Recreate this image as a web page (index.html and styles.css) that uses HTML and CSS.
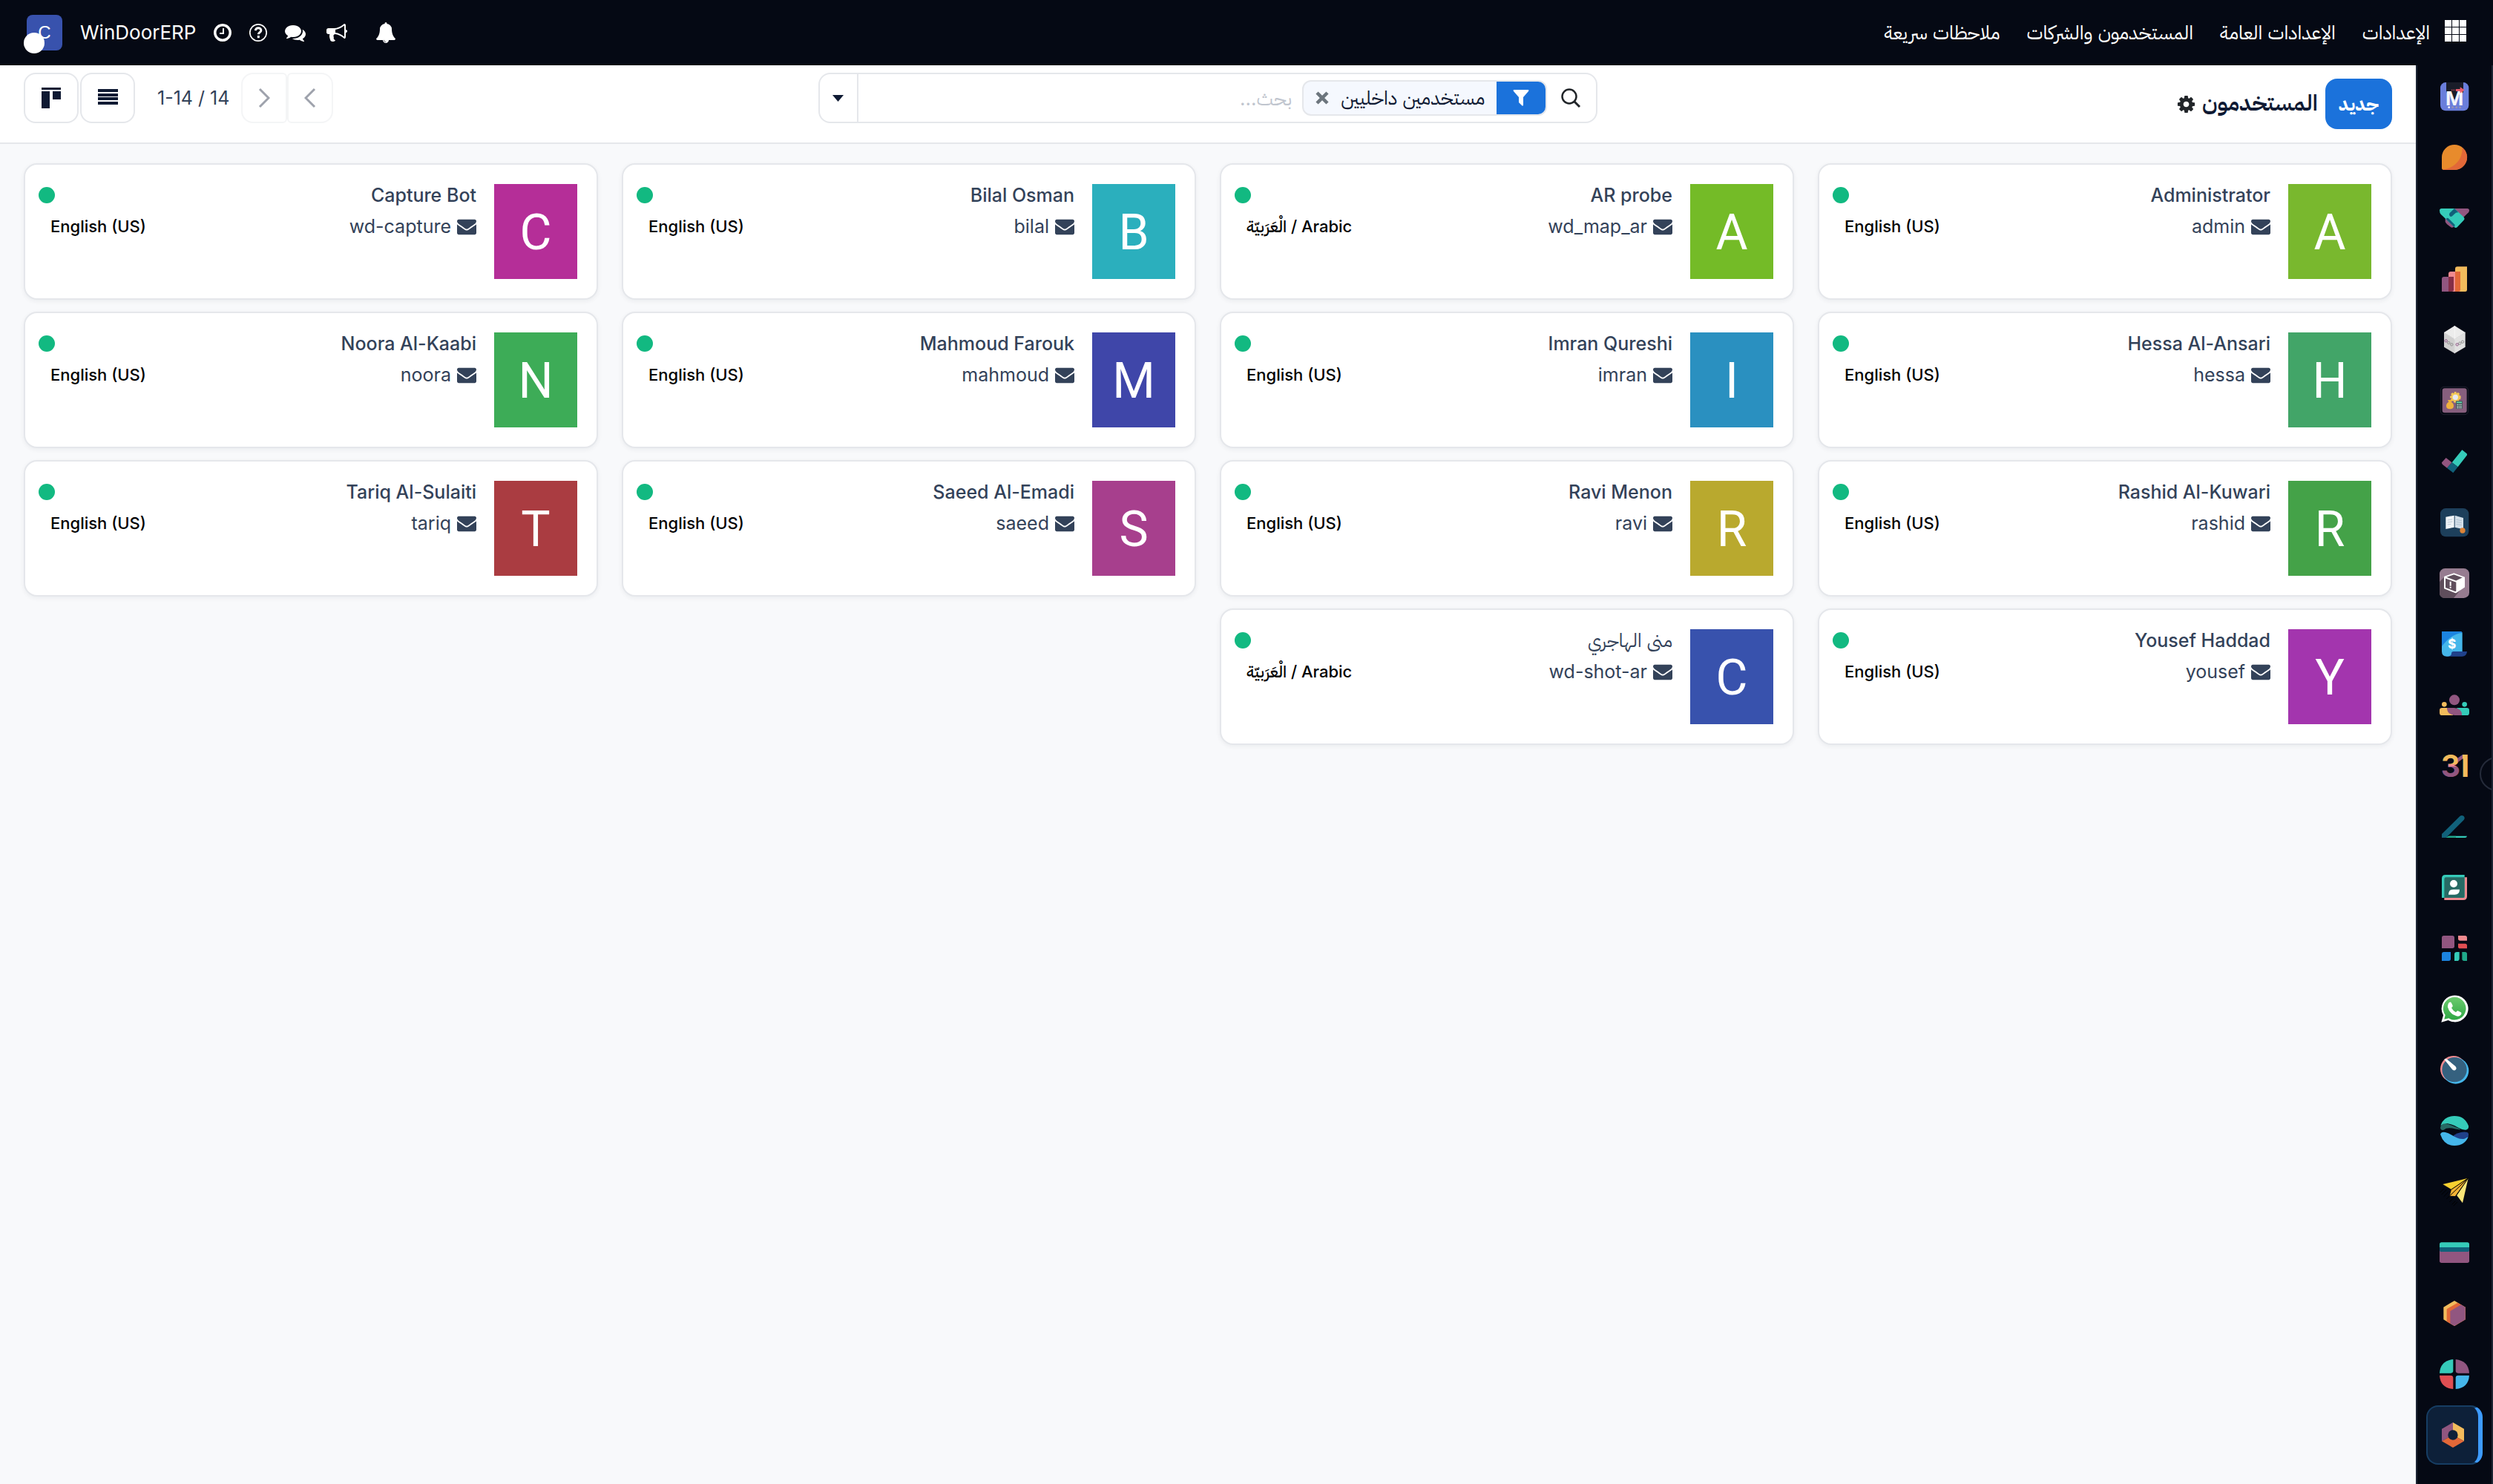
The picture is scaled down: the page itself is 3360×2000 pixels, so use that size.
FILE: index.html
```html
<!DOCTYPE html>
<html lang="ar" dir="rtl">
<head>
<meta charset="utf-8">
<meta name="viewport" content="width=device-width, initial-scale=1">
<title>المستخدمون</title>
<link rel="stylesheet" href="styles.css">
</head>
<body>
<svg class="defs" aria-hidden="true">
  <defs>
    <symbol id="envelope" viewBox="0 0 1792 1792"><path d="M1792 710v794q0 66-47 113t-113 47h-1472q-66 0-113-47t-47-113v-794q44 49 101 87 362 246 497 345 57 42 92.500 65.500t94.500 48 110 24.500h2q51 0 110-24.500t94.500-48 92.500-65.500q170-123 498-345 57-39 100-87zm0-294q0 79-49 151t-122 123q-376 261-468 325-10 7-42.500 31t-54 38.500-52 32.500-57.500 27-50 9h-2q-23 0-50-9t-57.500-27-52-32.500-54-38.500-42.500-31q-91-64-262-182.500t-205-142.500q-62-42-117-115.500t-55-136.500q0-78 41.500-130t118.500-52h1472q65 0 112.500 47t47.500 113z"/></symbol>
    <linearGradient id="wa" x1="0" y1="0" x2="0" y2="1"><stop offset="0" stop-color="#6ccb6e"/><stop offset="1" stop-color="#2fa744"/></linearGradient>
    <linearGradient id="three" gradientUnits="userSpaceOnUse" x1="0" y1="1371" x2="0" y2="1461"><stop offset=".43" stop-color="#f2bb5c"/><stop offset=".43" stop-color="#f08a8f"/><stop offset=".55" stop-color="#f08a8f"/><stop offset=".55" stop-color="#915680"/></linearGradient>
    <linearGradient id="one" gradientUnits="userSpaceOnUse" x1="188" y1="0" x2="225" y2="0"><stop offset=".5" stop-color="#915680"/><stop offset=".5" stop-color="#f2bb5c"/></linearGradient>
  </defs>
</svg>

<header class="topbar">
  <button class="bare" aria-label="التطبيقات"><svg width="29" height="29" viewBox="0 0 29 29" fill="#fff"><path d="M0 0h9v9H0zM10 0h9v9h-9zM20 0h9v9h-9zM0 10h9v9H0zM10 10h9v9h-9zM20 10h9v9h-9zM0 20h9v9H0zM10 20h9v9h-9zM20 20h9v9h-9z"/></svg></button>
  <nav class="menu">
    <a href="#">الإعدادات</a>
    <a href="#">الإعدادات العامة</a>
    <a href="#">المستخدمون والشركات</a>
    <a href="#">ملاحظات سريعة</a>
  </nav>
  <div class="systray" dir="ltr">
    <button class="bare user" aria-label="المستخدم"><span class="user-pic">C</span></button>
    <span class="company">WinDoorERP</span>
    <button class="bare" aria-label="الأنشطة"><svg width="24" height="28" viewBox="0 0 1536 1792" fill="#fff"><path d="M896 544v448q0 14-9 23t-23 9h-320q-14 0-23-9t-9-23v-64q0-14 9-23t23-9h224v-352q0-14 9-23t23-9h64q14 0 23 9t9 23zm416 352q0-148-73-273t-198-198-273-73-273 73-198 198-73 273 73 273 198 198 273 73 273-73 198-198 73-273zm224 0q0 209-103 385.500t-279.500 279.500-385.500 103-385.500-103-279.500-279.500-103-385.500 103-385.500 279.500-279.500 385.500-103 385.500 103 279.500 279.500 103 385.500z"/></svg></button>
    <button class="bare" aria-label="مساعدة"><svg width="24" height="28" viewBox="0 0 24 28" fill="none" stroke="#fff"><circle cx="12" cy="14" r="11.200" stroke-width="1.700"/><path d="M8.300 11.200c.3-2.600 2-3.500 3.900-3.500 2.100 0 3.700 1.300 3.700 3.200 0 2.900-3.600 2.800-3.600 5.300" stroke-width="2.900"/><path d="M12.300 18v3.200" stroke-width="3"/></svg></button>
    <button class="bare" aria-label="المحادثات"><svg width="28" height="28" viewBox="0 0 1792 1792" fill="#fff"><path d="M1408 768q0 139-94 257t-256.500 186.500-353.500 68.500q-86 0-176-16-124 88-278 128-36 9-86 16h-3q-11 0-20.500-8t-11.500-21q-1-3-1-6.500t.5-6.500 2-6l2.500-5 3.500-5.500 4-5 4.500-5 4-4.500q5-6 23-25t26-29.500 22.500-29 25-38.500 20.500-44q-124-72-195-177t-71-224q0-139 94-257t256.500-186.500 353.500-68.500 353.500 68.500 256.500 186.500 94 257zm384 256q0 120-71 224.500t-195 176.500q10 24 20.500 44t25 38.500 22.500 29 26 29.500 23 25q1 1 4 4.500t4.500 5 4 5 3.500 5.500l2.500 5 2 6 .5 6.500-1 6.500q-3 14-13 22t-22 7q-50-7-86-16-154-40-278-128-90 16-176 16-271 0-472-132 58 4 88 4 161 0 309-45t264-129q125-92 192-212t67-254q0-77-23-152 129 71 204 178t75 230z"/></svg></button>
    <button class="bare news" aria-label="الإعلانات"><svg width="28" height="28" viewBox="0 0 1792 1792" fill="#fff"><path d="M1664 640q53 0 90.500 37.500t37.500 90.500-37.500 90.500-90.500 37.500v384q0 52-38 90t-90 38q-417-347-812-380-58 19-91 66t-31 100.500 40 92.500q-20 33-23 65.500t6 58 33.500 55 48 50 61.500 50.500q-29 58-111.500 83t-168.500 11.500-132-55.500q-7-23-29.500-87.500t-32-94.500-23-89-15-101 3.500-98.500 22-110.500h-122q-66 0-113-47t-47-113v-192q0-66 47-113t113-47h480q435 0 896-384 52 0 90 38t38 90v384zm-128 604v-954q-394 302-768 343v270q377 42 768 341z"/></svg></button>
    <button class="bare bell" aria-label="التنبيهات"><svg width="28" height="28" viewBox="0 0 1792 1792" fill="#fff"><path d="M912 1696q0-16-16-16-59 0-101.500-42.500t-42.500-101.500q0-16-16-16t-16 16q0 73 51.500 124.500t124.500 51.500q16 0 16-16zm816-288q0 52-38 90t-90 38h-448q0 106-75 181t-181 75-181-75-75-181h-448q-52 0-90-38t-38-90q50-42 91-88t85-119.500 74.500-158.500 50-206 19.500-260q0-152 117-282.500t307-158.500q-8-19-8-39 0-40 28-68t68-28 68 28 28 68q0 20-8 39 190 28 307 158.500t117 282.500q0 139 19.500 260t50 206 74.500 158.500 85 119.500 91 88z"/></svg></button>
  </div>
</header>

<div class="shell">
  <aside class="apps">
    <a href="#" aria-label="Mail"><svg viewBox="114 90 120 120"><rect x="117" y="93" width="115" height="115" rx="22" fill="#6a7edb"/><path d="M141 93h69v40l-35 30-34-30z" fill="#1a1d29"/><text x="174" y="186" font-family="Inter" font-weight="700" font-size="78" text-anchor="middle" fill="#f4f5fa">M</text><path d="M180 120h17v-8l18 12-18 13v-8h-17z" fill="#e95b6b"/><path d="M162 124h16" stroke="#a8424f" stroke-width="5" stroke-dasharray="4 3"/><circle cx="152" cy="194" r="4" fill="#fff"/><g fill="#9a94b0"><circle cx="167" cy="194" r="4"/><circle cx="182" cy="194" r="4"/><circle cx="197" cy="194" r="4"/></g></svg></a>
    <a href="#" aria-label="Discuss"><svg viewBox="114 336 120 120"><path d="M123 439v-43a51 51 0 1 1 51 51h-43q-8 0-8-8z" fill="#e88b2c"/><path d="M206 356a51 51 0 0 1-32 91h-43l-5-2c50-4 82-42 80-89z" fill="#e26838"/></svg></a>
    <a href="#" aria-label="CRM"><svg viewBox="114 582 120 120"><path d="M174 603h52q8 0 8 8 0 4-3 8l-21 20-40-32z" fill="#915680"/><path d="M137 645l9-6 32 32q-10 12-18 8-18-12-23-22z" fill="#915680"/><path d="M114 611q0-8 8-8h52l36 33q8 8 2 14l-27 29q-6 5-12-1l-54-52q-5-6-5-15z" fill="#35cbb9"/><path d="M174 603l16 16q-10-1-17 7l-8 8q-6 4-10-1-4-6 0-12zM140 646q4-7 10-3l26 26-2 10z" fill="#11617a"/></svg></a>
    <a href="#" aria-label="Dashboards"><svg viewBox="114 828 120 120"><path d="M177 847q0-9 9-9h39v94q0 7-7 7h-41z" fill="#f2bb5c"/><path d="M150 867q0-9 9-9h39v72q0 9-9 9h-39z" fill="#f08a8f"/><path d="M177 858h21v72q0 9-9 9h-12z" fill="#e26838"/><path d="M123 888q0-9 9-9h39v51q0 9-9 9h-39z" fill="#915680"/><path d="M150 879h21v51q0 9-9 9h-12z" fill="#852e47"/></svg></a>
    <a href="#" aria-label="OCA"><svg viewBox="114 1074 120 120"><path d="M175 1077l43 27-43 27-43-27z" fill="#ececec"/><path d="M132 1104l43 27v58l-43-26z" fill="#cfcfcf"/><path d="M218 1104l-43 27v58l43-26z" fill="#e0e0e0"/><path d="M175 1077v112M132 1104l43 27 43-27" fill="none" stroke="#fafafa" stroke-width="2"/><g fill="none" stroke-width="3"><circle cx="140" cy="1138" r="5" stroke="#8d4f84"/><circle cx="151" cy="1146" r="5" stroke="#8f8f8f"/><circle cx="163" cy="1153" r="5" stroke="#8f8f8f"/><circle cx="185" cy="1153" r="5" stroke="#8d4f84"/><circle cx="196" cy="1148" r="5" stroke="#8f8f8f"/><circle cx="207" cy="1142" r="5" stroke="#8f8f8f"/></g></svg></a>
    <a href="#" aria-label="Accounting"><svg viewBox="114 1320 120 120"><rect x="118" y="1324" width="112" height="112" rx="14" fill="none" stroke="#20212f" stroke-width="3"/><rect x="125" y="1330" width="99" height="99" rx="10" fill="#875f7e"/><circle cx="178" cy="1366" r="18" fill="#f4c957" stroke="#f4c957" stroke-width="8" stroke-dasharray="8 5"/><circle cx="178" cy="1366" r="11" fill="#e8eaf2"/><path d="M147 1377h18l-4 8q10 6 10 16 0 13-15 13t-15-13q0-10 10-16z" fill="#f0b23d"/><rect x="180" y="1381" width="27" height="32" rx="2" fill="#475a5c"/><path d="M183 1387h21" stroke="#5fdcae" stroke-width="5"/><path d="M184 1396h20M184 1403h20M184 1409h20" stroke="#c8d3d2" stroke-width="4" stroke-dasharray="5 2"/></svg></a>
    <a href="#" aria-label="To-do"><svg viewBox="114 126 120 120"><path d="M123 190l17-19 24 19-20 22-18-14q-4-4-3-8z" fill="#915680"/><path d="M164 190l41-51 17 13q6 5 1 11l-35 45z" fill="#35cbb9"/><path d="M164 190l24 18-19 24-25-20z" fill="#11617a"/></svg></a>
    <a href="#" aria-label="Knowledge"><svg viewBox="114 372 120 120"><rect x="117" y="375" width="115" height="115" rx="22" fill="#1d3f5b"/><path d="M139 410l34-6v48l-34 7z" fill="#f1f5f8"/><path d="M176 404l34 10v46l-34-8z" fill="#d3dfe9"/><path d="M146 423l20-3M146 432l20-3M146 441l14-2M181 421l22 4M181 430l22 4M181 439l22 4" stroke="#9fb2c2" stroke-width="2"/><circle cx="207" cy="465" r="11" fill="#dd8438"/></svg></a>
    <a href="#" aria-label="Products"><svg viewBox="114 618 120 120"><rect x="114" y="618" width="120" height="120" rx="22" fill="#967c90"/><path d="M114 672l20-20 79 36-42 50h-35q-22 0-22-22z" fill="#5f4e5c"/><path d="M172 640l41 15v38l-34 22-44-17v-45z" fill="#5f4e5c" stroke="#fff" stroke-width="6" stroke-linejoin="round"/><path d="M181 670l32-15v38l-32 21z" fill="#fff"/><path d="M135 654l46 17 32-16" fill="none" stroke="#fff" stroke-width="6"/><path d="M158 671v18M158 692v6" stroke="#fff" stroke-width="6"/></svg></a>
    <a href="#" aria-label="Invoicing"><svg viewBox="114 864 120 120"><path d="M162 954h63q-2 20-20 20h-63z" fill="#20418a"/><path d="M123 873h75q8 0 8 8v73h-36q-8 0-8 8 0 12-19 12-20 0-20-20z" fill="#45b6ea"/><path d="M123 933v-60h75q6 0 8 5-44 4-83 55z" fill="#1c84e0"/><text x="164" y="942" font-family="Inter" font-weight="800" font-size="50" text-anchor="middle" fill="#fff">$</text></svg></a>
    <a href="#" aria-label="Employees"><svg viewBox="114 1110 120 120"><circle cx="174" cy="1150" r="21" fill="#915680"/><circle cx="133" cy="1168" r="10" fill="#f2bb5c"/><circle cx="215" cy="1168" r="10" fill="#35cbb9"/><path d="M124 1182h40l5 30h-45q-10 0-10-10v-10q0-10 10-10z" fill="#f2bb5c"/><path d="M184 1182h40q10 0 10 10v10q0 10-10 10h-40z" fill="#35cbb9"/><path d="M144 1182h29q32 2 31 30h-29q-32-4-31-30z" fill="#915680"/></svg></a>
    <a href="#" aria-label="Calendar"><svg viewBox="114 1356 120 120"><text y="1461" font-family="Inter" font-weight="700" font-size="122"><tspan x="119" fill="url(#three)">3</tspan><tspan x="182" fill="url(#one)">1</tspan></text></svg></a>
    <a href="#" aria-label="Sign"><svg viewBox="114 102 120 120"><path d="M141 207l12-7h72q-1 7-8 7z" fill="#35cbb9"/><path d="M138 207l12-7h30v7z" fill="#20a98a"/><path d="M123 207v-15l73-72q8-6 16 0 6 8 0 15l-72 72z" fill="#11617a"/></svg></a>
    <a href="#" aria-label="Contacts"><svg viewBox="114 348 120 120"><path d="M133 367h92v77q0 15-15 15h-77z" fill="#f08a8f"/><path d="M123 372q0-15 15-15h77v93h-92z" fill="#35cbb9"/><path d="M133 374q0-7 7-7h75v77q0 6-6 6h-76z" fill="#276a64"/><circle cx="171" cy="393" r="15" fill="#fff"/><path d="M150 437q0-21 20-21h25q0 21-20 21z" fill="#fff"/></svg></a>
    <a href="#" aria-label="Apps"><svg viewBox="114 594 120 120"><path d="M123 611q0-8 8-8h35q8 0 8 8v35q0 8-8 8h-43z" fill="#915680"/><path d="M189 603h28q8 0 8 8v12h-28q-8 0-8-8z" fill="#f08a8f"/><path d="M189 635h28q8 0 8 8v12h-28q-8 0-8-8z" fill="#df4e52"/><path d="M123 677q0-8 8-8h28v28q0 8-8 8h-28z" fill="#1c84e0"/><path d="M174 679q0-10 10-10h10v26q0 10-10 10h-10z" fill="#35cbb9"/><path d="M205 669h12q8 0 8 8v28h-12q-8 0-8-8z" fill="#20a98a"/></svg></a>
    <a href="#" aria-label="WhatsApp"><svg viewBox="114 840 120 120"><path d="M121 953l8-28a54 54 0 1 1 20 20z" fill="#fff"/><path d="M133 941l4-17a46 46 0 1 1 14 13z" fill="url(#wa)"/><path d="M152 874q6-5 10 1l5 11q1 3-5 9 6 12 18 18 5-7 8-6l12 6q4 2 1 9-6 10-19 6-28-8-35-36-1-12 5-18z" fill="#fff"/></svg></a>
    <a href="#" aria-label="Timesheets"><svg viewBox="114 1086 120 120"><circle cx="170" cy="1142" r="53" fill="#f08a8f"/><circle cx="179" cy="1149" r="53" fill="#45b6ea"/><circle cx="174" cy="1145" r="50" fill="#35617f"/><path d="M133 1103q5-5 11 0l34 28q7 8 1 14-7 6-14-1z" fill="#fff"/></svg></a>
    <a href="#" aria-label="Subscriptions"><svg viewBox="114 1332 120 120"><path d="M117 1380q4-26 30-16l40 16q26 12-12 4-30-8-44 4-12 4-14-8z" fill="#276a64"/><path d="M118 1370q14-38 56-38t57 40q2 14-10 16-12 2-30-8-24-14-46-18-16-2-27 8z" fill="#35cbb9"/><path d="M231 1404q-4-10-30-6-30 8-32 16 28 16 52 10 12-6 10-20z" fill="#20418a"/><path d="M117 1406q4-12 20-8 16 4 34 16 24 14 44 10l15-8q-14 36-56 36t-57-46z" fill="#45b6ea"/></svg></a>
    <a href="#" aria-label="Send"><svg viewBox="114 138 120 120"><path d="M115 202l16-16M122 210l20-20M131 218l20-20M142 228l18-18M154 240l16-16M164 250l14-14M170 256l16-16" stroke="#000" stroke-width="3"/><path d="M127 168l103-25-68 46z" fill="#f7d030"/><path d="M230 143l-68 46-7 26 22 1z" fill="#f4b335"/><path d="M230 143l-23 101-24-32z" fill="#fae678"/><path d="M230 143l-75 72M230 143l-68 46M230 143l-47 69" stroke="#000" stroke-width="3"/></svg></a>
    <a href="#" aria-label="Payments"><svg viewBox="114 384 120 120"><path d="M114 430h120v48q0 8-8 8H122q-8 0-8-8z" fill="#915680"/><path d="M114 420h120v14q0 7-8 7H122q-8 0-8-7z" fill="#11617a"/><path d="M114 411q0-8 8-8h104q8 0 8 8v12H114z" fill="#35cbb9"/></svg></a>
    <a href="#" aria-label="Inventory"><svg viewBox="114 630 120 120"><path d="M130 665l44-26 44 26v50l-44 26-44-26z" fill="#f2bb5c"/><path d="M143 673l44-26 31 18v50l-44 26-31-18z" fill="#e26838"/><path d="M157 681l44-26 17 10v50l-44 26-17-10z" fill="#915680"/></svg></a>
    <a href="#" aria-label="Reports"><svg viewBox="114 876 120 120"><path d="M169 876v46q0 10-10 10h-45q3-50 55-56z" fill="#35cbb9"/><path d="M179 876v46q0 10 10 10h45q-3-50-55-56z" fill="#915680"/><path d="M169 996v-45q0-10-10-10h-45q3 50 55 55z" fill="#df4e52"/><path d="M179 996v-45q0-10 10-10h45q-3 50-55 55z" fill="#45b6ea"/></svg></a>
    <a href="#" class="active" aria-label="Settings"><svg viewBox="108 1122 120 120"><path d="M168 1131v51l-45 25v-50z" fill="#915680"/><path d="M168 1131l45 26v50l-45-25z" fill="#f2bb5c"/><path d="M123 1207l45-25 45 25-45 26z" fill="#e26838"/><circle cx="168" cy="1182" r="20" fill="#0d2039"/></svg></a>
    <button class="fold" aria-label="طي الشريط"></button>
  </aside>

  <main class="page">
    <section class="control">
      <div class="crumb">
        <button class="primary">جديد</button>
        <h1>المستخدمون</h1>
        <button class="bare" aria-label="إجراءات"><svg width="27" height="27" viewBox="0 0 1792 1792" fill="#212529"><path d="M1152 896q0-106-75-181t-181-75-181 75-75 181 75 181 181 75 181-75 75-181zm512-109v222q0 12-8 23t-20 13l-185 28q-19 54-39 91 35 50 107 138 10 12 10 25t-9 23q-27 37-99 108t-94 71q-12 0-26-9l-138-108q-44 23-91 38-16 136-29 186-7 28-36 28h-222q-14 0-24.500-8.500t-11.500-21.500l-28-184q-49-16-90-37l-141 107q-10 9-25 9-14 0-25-11-126-114-165-168-7-10-7-23 0-12 8-23 15-21 51-66.500t54-70.500q-27-50-41-99l-183-27q-13-2-21-12.500t-8-23.500v-222q0-12 8-23t19-13l186-28q14-46 39-92-40-57-107-138-10-12-10-24 0-10 9-23 26-36 98.500-107.500t94.500-71.500q13 0 26 10l138 107q44-23 91-38 16-136 29-186 7-28 36-28h222q14 0 24.500 8.500t11.500 21.500l28 184q49 16 90 37l142-107q9-9 24-9 13 0 25 10 129 119 165 170 7 8 7 22 0 12-8 23-15 21-51 66.500t-54 70.500q26 50 41 98l183 28q13 2 21 12.500t8 23.500z"/></svg></button>
      </div>
      <div class="search" role="search">
        <svg class="lens" width="28" height="28" viewBox="0 0 28 28" fill="none" stroke="#212529"><circle cx="12" cy="12" r="9.500" stroke-width="2.500"/><path d="M18.500 18.500l7.500 7.500" stroke-width="3"/></svg>
        <div class="facet">
          <span class="facet-icon"><svg width="22" height="22" viewBox="0 0 22 22" fill="#fff"><path d="M1 0h20q1 1 0 2l-7 8v11q-1 1-2 0l-4-4v-7L1 2q-1-1 0-2z"/></svg></span>
          <span class="facet-text">مستخدمين داخليين</span>
          <button class="bare" aria-label="إزالة"><svg width="18" height="18" viewBox="0 0 18 18" stroke="#6c757d" stroke-width="4.500"><path d="M2 2l14 14M16 2L2 16"/></svg></button>
        </div>
        <input type="search" placeholder="بحث..." aria-label="بحث">
        <button class="caret" aria-label="خيارات البحث"><svg width="15" height="9" viewBox="0 0 15 9" fill="#0f1a33"><path d="M0 0h15L7.500 9z"/></svg></button>
      </div>
      <div class="tools" dir="ltr">
        <div class="views">
          <button class="box" aria-label="كانبان"><svg width="26" height="28" viewBox="0 0 26 28" fill="#0f1a33"><path d="M0 0h26v3H0zM0 5h11v23H0zM15 5h11v11H15z"/></svg></button>
          <button class="box" aria-label="قائمة"><svg width="27" height="28" viewBox="0 0 27 28" fill="#0f1a33"><path d="M0 2h27v4H0zM0 8h27v4H0zM0 13h27v4H0zM0 19h27v4H0z"/></svg></button>
        </div>
        <span class="count">1-14 / 14</span>
        <div class="pager">
          <button class="box" disabled aria-label="التالي"><svg width="16" height="28" viewBox="0 0 16 28" fill="none" stroke="#0f1a33" stroke-width="3"><path d="M2 2l12 12L2 26"/></svg></button>
          <button class="box" disabled aria-label="السابق"><svg width="16" height="28" viewBox="0 0 16 28" fill="none" stroke="#0f1a33" stroke-width="3"><path d="M14 2L2 14l12 12"/></svg></button>
        </div>
      </div>
    </section>

    <section class="cards">
      <article class="card"><span class="pic lime">A</span><div class="who"><h2>Administrator</h2><p><svg><use href="#envelope"/></svg>admin</p></div><div class="state"><i></i><span>English (US)</span></div></article>
      <article class="card"><span class="pic lime2">A</span><div class="who"><h2>AR probe</h2><p><svg><use href="#envelope"/></svg>wd_map_ar</p></div><div class="state"><i></i><span>Arabic / الْعَرَبيّة</span></div></article>
      <article class="card"><span class="pic cyan">B</span><div class="who"><h2>Bilal Osman</h2><p><svg><use href="#envelope"/></svg>bilal</p></div><div class="state"><i></i><span>English (US)</span></div></article>
      <article class="card"><span class="pic pink">C</span><div class="who"><h2>Capture Bot</h2><p><svg><use href="#envelope"/></svg>wd-capture</p></div><div class="state"><i></i><span>English (US)</span></div></article>
      <article class="card"><span class="pic sea">H</span><div class="who"><h2>Hessa Al-Ansari</h2><p><svg><use href="#envelope"/></svg>hessa</p></div><div class="state"><i></i><span>English (US)</span></div></article>
      <article class="card"><span class="pic sky">I</span><div class="who"><h2>Imran Qureshi</h2><p><svg><use href="#envelope"/></svg>imran</p></div><div class="state"><i></i><span>English (US)</span></div></article>
      <article class="card"><span class="pic indigo">M</span><div class="who"><h2>Mahmoud Farouk</h2><p><svg><use href="#envelope"/></svg>mahmoud</p></div><div class="state"><i></i><span>English (US)</span></div></article>
      <article class="card"><span class="pic green">N</span><div class="who"><h2>Noora Al-Kaabi</h2><p><svg><use href="#envelope"/></svg>noora</p></div><div class="state"><i></i><span>English (US)</span></div></article>
      <article class="card"><span class="pic leaf">R</span><div class="who"><h2>Rashid Al-Kuwari</h2><p><svg><use href="#envelope"/></svg>rashid</p></div><div class="state"><i></i><span>English (US)</span></div></article>
      <article class="card"><span class="pic gold">R</span><div class="who"><h2>Ravi Menon</h2><p><svg><use href="#envelope"/></svg>ravi</p></div><div class="state"><i></i><span>English (US)</span></div></article>
      <article class="card"><span class="pic plum">S</span><div class="who"><h2>Saeed Al-Emadi</h2><p><svg><use href="#envelope"/></svg>saeed</p></div><div class="state"><i></i><span>English (US)</span></div></article>
      <article class="card"><span class="pic brick">T</span><div class="who"><h2>Tariq Al-Sulaiti</h2><p><svg><use href="#envelope"/></svg>tariq</p></div><div class="state"><i></i><span>English (US)</span></div></article>
      <article class="card"><span class="pic violet">Y</span><div class="who"><h2>Yousef Haddad</h2><p><svg><use href="#envelope"/></svg>yousef</p></div><div class="state"><i></i><span>English (US)</span></div></article>
      <article class="card"><span class="pic blue">C</span><div class="who"><h2 class="regular">منى الهاجري</h2><p><svg><use href="#envelope"/></svg>wd-shot-ar</p></div><div class="state"><i></i><span>Arabic / الْعَرَبيّة</span></div></article>
    </section>
  </main>
</div>
</body>
</html>
```
FILE: styles.css
```css
* { box-sizing: border-box; }

:root {
  --ink: #0f1a33;
  --text: #334259;
  --line: #e5e7eb;
  --night: #050914;
  --blue: #1b72db;
}

body {
  margin: 0;
  display: flex;
  flex-direction: column;
  min-height: 100vh;
  background: #f8f9fb;
  color: var(--text);
  font: 26px/30px "Inter", "IBM Plex Sans Arabic", "Noto Sans Arabic", sans-serif;
  overflow-x: hidden;
}

svg { display: block; direction: ltr; }
.defs { position: absolute; width: 0; height: 0; }
a { color: inherit; text-decoration: none; }
button, input { font: inherit; color: inherit; margin: 0; padding: 0; border: 0; background: none; }
h1, h2, p { margin: 0; }
.bare { display: flex; align-items: center; }

/* Top bar */
.topbar {
  display: flex;
  align-items: center;
  height: 88px;
  padding: 0 36px;
  background: var(--night);
  color: #fff;
}
.topbar > .bare { margin-top: -6px; }
.menu { display: flex; gap: 36px; margin-right: 20px; }
.systray { display: flex; align-items: center; gap: 24px; margin-right: auto; }
.user { position: relative; }
.user-pic {
  display: grid;
  place-items: center;
  width: 48px;
  height: 48px;
  border-radius: 8px;
  background: #3852ad;
  font: 24px/48px "Liberation Sans", sans-serif;
}
.user::after {
  content: "";
  position: absolute;
  left: -4px;
  bottom: -4px;
  width: 28px;
  height: 28px;
  border-radius: 50%;
  background: #fff;
}
.news { margin-left: 4px; }
.bell { margin-left: 14px; }

/* App rail */
.shell { display: flex; flex: 1; }
.apps {
  position: relative;
  flex: none;
  display: flex;
  flex-direction: column;
  gap: 2px;
  width: 104px;
  padding: 2px 12px;
  border: solid #1c2433;
  border-width: 0 2px;
  background: var(--night);
  overflow: hidden;
}
.apps a {
  display: grid;
  place-items: center;
  height: 80px;
  border: 2px solid transparent;
  border-radius: 16px;
}
.apps svg { width: 40px; height: 40px; overflow: visible; }
.apps .active { border-color: #163d63; border-right: 6px solid #3d9bff; background: #0d2039; }
.fold {
  position: absolute;
  top: 50%;
  left: 84px;
  width: 46px;
  height: 46px;
  margin-top: -24px;
  border: 2px solid #252b3a;
  border-radius: 50%;
}

/* Control panel */
.page { flex: 1; min-width: 0; }
.control {
  display: grid;
  grid-template-columns: repeat(3, minmax(0, 1fr));
  gap: 20px;
  align-items: start;
  padding: 10px 32px 18px;
  border-bottom: 2px solid var(--line);
  background: #fff;
}
.crumb { display: flex; align-items: center; padding-top: 8px; }
.crumb h1 { margin: 0 10px 0 8px; padding-bottom: 4px; color: var(--ink); font-size: 30px; line-height: 40px; font-weight: 600; }
.primary {
  height: 68px;
  padding: 0 18px;
  border-radius: 16px;
  background: var(--blue);
  color: #fff;
  font-size: 25px;
  font-weight: 700;
}
.search {
  display: flex;
  align-items: center;
  height: 68px;
  padding-right: 20px;
  border: 2px solid var(--line);
  border-radius: 16px;
}
.lens { flex: none; }
.facet {
  flex: none;
  display: flex;
  align-items: center;
  height: 48px;
  margin-right: 18px;
  padding-left: 16px;
  border: 2px solid var(--line);
  border-radius: 12px;
  background: #f5f8fe;
  color: var(--ink);
  overflow: hidden;
}
.facet-icon { display: grid; place-items: center; width: 66px; height: 44px; background: var(--blue); }
.facet-text { padding: 0 16px; }
.search input { flex: 1; min-width: 0; height: 64px; padding: 0 14px; outline: 0; appearance: none; }
.search input::placeholder { color: #c0c5ce; opacity: 1; }
.caret { display: grid; place-items: center; width: 52px; height: 64px; border-right: 2px solid var(--line); }
.tools { display: flex; align-items: center; }
.views { display: flex; gap: 2px; }
.box {
  display: grid;
  place-items: center;
  width: 74px;
  height: 68px;
  border: 2px solid var(--line);
  border-radius: 16px;
}
.count { margin: 0 16px 0 30px; font-size: 25px; }
.pager { display: flex; }
.pager .box { width: 62px; opacity: .4; }
.pager .box:first-child { border-radius: 16px 6px 6px 16px; }
.pager .box:last-child { border-radius: 6px 16px 16px 6px; }

/* User cards */
.cards {
  display: grid;
  grid-template-columns: repeat(4, minmax(0, 1fr));
  gap: 16px 32px;
  padding: 26px 32px;
}
.card {
  display: flex;
  align-items: flex-start;
  padding: 26px;
  border: 2px solid var(--line);
  border-radius: 18px;
  background: #fff;
  box-shadow: 0 2px 6px rgb(15 26 51 / 6%);
}
.pic {
  width: 112px;
  height: 128px;
  color: #fff;
  font: 66px/132px "Roboto", "Liberation Sans", sans-serif;
  text-align: center;
}
.who { display: grid; gap: 12px; margin-right: 24px; font-size: 25px; }
.who h2 { font-size: 25px; line-height: 30px; font-weight: 500; }
.who .regular { font-weight: 400; }
.who p { display: flex; align-items: center; gap: 8px; }
.who p svg { width: 26px; height: 26px; fill: var(--text); }
.state {
  display: grid;
  gap: 12px;
  margin-right: auto;
  margin-left: -8px;
  direction: ltr;
  color: #000;
  font-size: 22px;
  font-weight: 500;
}
.state i { width: 22px; height: 22px; margin: 4px 0; border-radius: 50%; background: #12b981; }
.state span { padding-left: 16px; direction: rtl; }

.lime { background: #79b82e; }
.lime2 { background: #74bb27; }
.cyan { background: #2bafbd; }
.pink { background: #b52e98; }
.sea { background: #42a568; }
.sky { background: #2a90c0; }
.indigo { background: #3f46a9; }
.green { background: #3dac57; }
.leaf { background: #44a248; }
.gold { background: #b9a92e; }
.plum { background: #a73f8d; }
.brick { background: #aa3c41; }
.violet { background: #a335ae; }
.blue { background: #3852ad; }
```
